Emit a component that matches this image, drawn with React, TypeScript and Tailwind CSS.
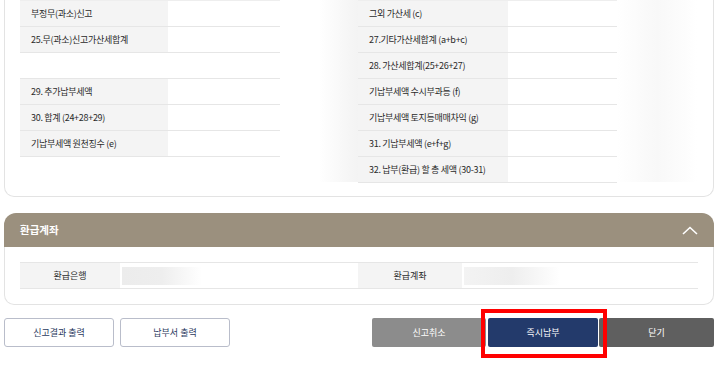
import React from "react";

const leftRows: (string | null)[] = [
  "부정무(과소)신고",
  "25.무(과소)신고가산세합계",
  null,
  "29. 추가납부세액",
  "30. 합계 (24+28+29)",
  "기납부세액 원천징수 (e)",
];

const rightRows: string[] = [
  "그외 가산세 (c)",
  "27.기타가산세합계 (a+b+c)",
  "28. 가산세합계(25+26+27)",
  "기납부세액 수시부과등 (f)",
  "기납부세액 토지등매매차익 (g)",
  "31. 기납부세액 (e+f+g)",
  "32. 납부(환급) 할 총 세액 (30-31)",
];

function Row({ label, labelW, valueW }: { label: string | null; labelW: string; valueW: string }) {
  if (label === null) {
    return <div className="h-[26px] border-b border-[#e6e6e6]" />;
  }
  return (
    <div className="flex h-[26px] border-b border-[#e6e6e6]">
      <div className={`${labelW} bg-[#f4f4f4] flex items-center pl-[11px] text-[9px] tracking-[-0.3px] text-[#2a2a2a]`}>
        {label}
      </div>
      <div className={`${valueW} bg-white`} />
    </div>
  );
}

export default function App() {
  return (
    <div
      className="relative w-[720px] h-[372px] bg-white overflow-hidden"
      style={{ fontFamily: '"Noto Sans CJK KR", "Noto Sans", sans-serif' }}
    >
      {/* 세액 계산 카드 */}
      <div className="ml-[4px] w-[710px] h-[197px] border border-t-0 border-[#e3e3e3] rounded-b-[10px] pl-[15px] flex">
        <div className="w-[260px] flex flex-col border-t border-[#eeeeee]">
          {leftRows.map((r, i) => (
            <Row key={i} label={r} labelW="w-[148px]" valueW="w-[112px]" />
          ))}
        </div>
        <div className="w-[78px] h-[182px] bg-linear-to-r from-white via-white to-[#f3f3f3]" />
        <div className="w-[259px] flex flex-col border-t border-[#eeeeee]">
          {rightRows.map((r, i) => (
            <Row key={i} label={r} labelW="w-[150px]" valueW="w-[109px]" />
          ))}
        </div>
        <div className="w-[80px] h-[182px] bg-linear-to-r from-white via-[#f8f8f8] to-white" />
      </div>

      {/* 환급계좌 */}
      <div className="mt-[16px] ml-[4px] w-[710px]">
        <div className="h-[34px] bg-[#9b907e] rounded-t-[12px] flex items-center justify-between pl-[16px] pr-[16px]">
          <span className="text-white text-[10.5px] font-bold">환급계좌</span>
          <svg width="16" height="9" viewBox="0 0 16 9" fill="none">
            <path d="M1 8L8 1.5L15 8" stroke="white" strokeWidth="1.6" />
          </svg>
        </div>
        <div className="h-[58px] border border-t-0 border-[#e3e3e3] rounded-b-[10px] pt-[15px] pl-[15px]">
          <div className="w-[678px] h-[27px] flex border-y border-[#e6e6e6] text-[9px] text-[#2a2a2a]">
            <div className="w-[100px] bg-[#f4f4f4] flex items-center justify-center">환급은행</div>
            <div className="w-[238px] flex items-center pl-[2px]">
              <div className="w-[80px] h-[18px] bg-linear-to-r from-[#ececec] via-[#eeeeee] to-white" />
            </div>
            <div className="w-[104px] bg-[#f4f4f4] flex items-center justify-center">환급계좌</div>
            <div className="w-[236px] flex items-center pl-[2px]">
              <div className="w-[96px] h-[18px] bg-linear-to-r from-[#f3f3f3] via-[#eeeeee] to-white" />
            </div>
          </div>
        </div>
      </div>

      {/* 버튼 */}
      <div className="mt-[13px] flex h-[29px]">
        <button className="ml-[4px] w-[110px] border border-[#b9bdca] rounded-[3px] bg-white text-[9px] text-[#2a3a5e]">
          신고결과 출력
        </button>
        <button className="ml-[6px] w-[110px] border border-[#b9bdca] rounded-[3px] bg-white text-[9px] text-[#2a3a5e]">
          납부서 출력
        </button>
        <button className="ml-[142px] w-[114px] rounded-[2px] bg-[#8c8c8c] text-[9px] text-white">신고취소</button>
        <button className="ml-[2px] w-[110px] rounded-[2px] bg-[#233a6b] text-[9px] text-white">즉시납부</button>
        <button className="ml-[1px] w-[115px] rounded-[2px] bg-[#5f5f5f] text-[9px] text-white">닫기</button>
      </div>

      {/* 강조 표시 */}
      <div className="absolute left-[481px] top-[309px] w-[126px] h-[49px] border-4 border-[#ff0000]" />
    </div>
  );
}
